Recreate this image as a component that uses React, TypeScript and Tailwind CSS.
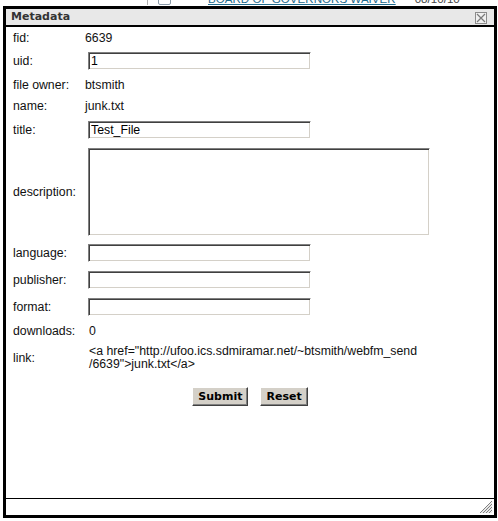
import React from "react";

const body = { fontFamily: '"Liberation Sans", Arial, sans-serif' };
const tahoma = { fontFamily: '"DejaVu Sans", Verdana, sans-serif' };

const inputCls =
  "h-[18px] border border-t-[#808080] border-l-[#808080] border-b-white border-r-white shadow-[inset_1px_1px_0_#404040,inset_-1px_-1px_0_#d4d0c8] bg-white text-[12.3px] leading-[14px] px-[2px] text-black outline-none";

function Row({
  h,
  label,
  children,
  valueX = 85,
}: {
  h: number;
  label: string;
  children?: React.ReactNode;
  valueX?: number;
}) {
  return (
    <div className="flex items-center" style={{ height: h }}>
      <div className="pl-[7px] text-[12.3px] leading-[14px] text-[#111]" style={{ width: valueX - 6 }}>
        {label}
      </div>
      <div className="flex-1 text-[12.3px] leading-[14px] text-[#111]">{children}</div>
    </div>
  );
}

function Btn({ children }: { children: React.ReactNode }) {
  return (
    <button
      className="h-[19px] px-[5px] bg-[#d4d0c8] border border-t-white border-l-white border-b-[#404040] border-r-[#404040] shadow-[inset_-1px_-1px_0_#808080] text-[11px] font-bold leading-[14px] text-black"
      style={tahoma}
    >
      {children}
    </button>
  );
}

export default function App() {
  return (
    <div className="relative w-[498px] h-[521px] bg-white overflow-hidden" style={body}>
      {/* page behind the dialog */}
      <div className="flex items-end h-[8px] -mt-[3px]">
        <div className="w-[147px]" />
        <div className="w-px h-[12px] bg-[#b0b0b0]" />
        <div className="ml-[10px] w-[13px] h-[12px] border border-[#8a9aa8] rounded-[2px]" />
        <div className="ml-[37px] text-[11.6px] leading-[12px] text-[#1d6a8c] underline">
          BOARD OF GOVERNORS WAIVER
        </div>
        <div className="ml-[19px] text-[11.6px] leading-[12px] text-[#444]">08/10/10</div>
      </div>

      {/* dialog window */}
      <div className="absolute left-[3px] top-[6px] w-[494px] h-[512px] border-[3px] border-black bg-white flex flex-col">
        <div className="h-[18px] bg-[#e8e8e8] border-b-2 border-black flex items-center justify-between pl-[5px] pr-[7px]">
          <span className="text-[11px] font-bold leading-[14px] text-[#333]" style={tahoma}>
            Metadata
          </span>
          <div className="mt-[2px] w-[12px] h-[12px] border border-[#8c8c8c] bg-[#f0f0f0] flex items-center justify-center">
            <svg width="10" height="10" viewBox="0 0 10 10">
              <path d="M1 1 L9 9 M9 1 L1 9" stroke="#7a7a7a" strokeWidth="1.2" />
            </svg>
          </div>
        </div>

        <div className="flex-1 flex flex-col">
          <Row h={22} label="fid:">6639</Row>
          <Row h={24} label="uid:" valueX={88}>
            <input className={`${inputCls} w-[223px]`} defaultValue="1" style={body} />
          </Row>
          <Row h={24} label="file owner:">btsmith</Row>
          <Row h={18} label="name:">junk.txt</Row>
          <Row h={30} label="title:" valueX={88}>
            <input className={`${inputCls} w-[223px]`} defaultValue="Test_File" style={body} />
          </Row>
          <Row h={94} label="description:" valueX={88}>
            <textarea className={`${inputCls} w-[342px] h-[88px] block resize-none`} style={body} />
          </Row>
          <Row h={28} label="language:" valueX={88}>
            <input className={`${inputCls} w-[223px]`} style={body} />
          </Row>
          <Row h={26} label="publisher:" valueX={88}>
            <input className={`${inputCls} w-[223px]`} style={body} />
          </Row>
          <Row h={28} label="format:" valueX={88}>
            <input className={`${inputCls} w-[223px]`} style={body} />
          </Row>
          <Row h={20} label="downloads:" valueX={89}>
            0
          </Row>
          <Row h={34} label="link:" valueX={89}>
            <div className="leading-[13px]">
              &lt;a href="http://ufoo.ics.sdmiramar.net/~btsmith/webfm_send
              <br />
              /6639"&gt;junk.txt&lt;/a&gt;
            </div>
          </Row>
          <div className="flex justify-center gap-[12px] mt-[12px]">
            <Btn>Submit</Btn>
            <Btn>Reset</Btn>
          </div>
        </div>

        <div className="h-[17px] border-t border-black flex justify-end items-end">
          <svg width="14" height="14" viewBox="0 0 14 14" className="mr-[1px] mb-[1px]">
            <path
              d="M13 1 L1 13 M13 4 L4 13 M13 7 L7 13 M13 10 L10 13"
              stroke="#808080"
              strokeWidth="1"
            />
            <path d="M13 2.5 L2.5 13 M13 5.5 L5.5 13 M13 8.5 L8.5 13 M13 11.5 L11.5 13" stroke="#d0d0d0" strokeWidth="1" />
          </svg>
        </div>
      </div>
    </div>
  );
}
